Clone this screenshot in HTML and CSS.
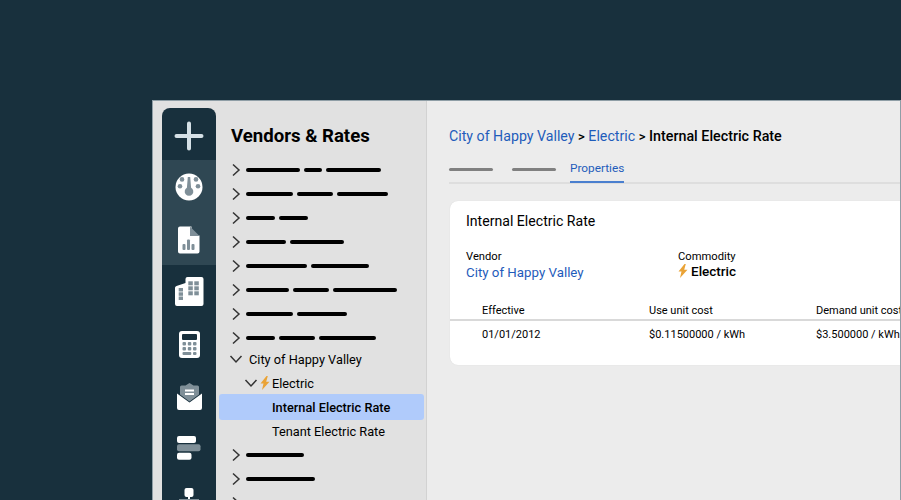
FILE: index.html
```html
<!DOCTYPE html>
<html lang="en">
<head>
<meta charset="utf-8">
<title>Vendors &amp; Rates</title>
<link rel="stylesheet" href="styles.css">
</head>
<body>
<div class="window">
  <nav class="rail">
    <div class="rail-item rail-add">
      <svg width="30" height="30" viewBox="0 0 30 30"><path d="M15 2.500v25M2.500 15h25" class="add-stroke"/></svg>
    </div>
    <div class="rail-active">
      <div class="rail-item rail-gauge">
        <svg width="28" height="28" viewBox="0 0 28 28"><circle cx="14" cy="14" r="13.500" fill="#fff"/><circle cx="5" cy="13.300" r="2.300" class="dim"/><circle cx="23" cy="13.300" r="2.300" class="dim"/><circle cx="7" cy="6.400" r="2.300" class="dim"/><circle cx="21" cy="6.400" r="2.300" class="dim"/><path d="M12.800 4h2.400l.9 10.800a4.300 4.300 0 1 1-4.200 0z" class="dim"/></svg>
      </div>
      <div class="rail-item rail-doc">
        <svg width="22" height="28" viewBox="0 0 22 28"><path d="M2 .5h11.500v9h8V25.500a2 2 0 0 1-2 2H2a2 2 0 0 1-2-2v-23a2 2 0 0 1 2-2z" fill="#fff"/><path d="M12 .5l9.500 9.500h-9.500z" class="dim"/><rect x="4.500" y="18" width="3" height="6" rx="1" class="dim"/><rect x="9" y="13.500" width="3" height="10.500" rx="1" class="dim"/><rect x="13.500" y="18" width="3" height="6" rx="1" class="dim"/></svg>
      </div>
    </div>
    <div class="rail-item rail-city">
      <svg width="29" height="29" viewBox="0 0 29 29"><path d="M10.500 2a2 2 0 0 1 2-2h14a2 2 0 0 1 2 2v25a2 2 0 0 1-2 2H2a2 2 0 0 1-2-2V11a2 2 0 0 1 1.500-2l9-3z" fill="#fff"/><g class="dim"><rect x="13.300" y="4.300" width="4.500" height="4"/><rect x="19.300" y="4.300" width="4.500" height="4"/><rect x="13.300" y="9.300" width="4.500" height="4"/><rect x="19.300" y="9.300" width="4.500" height="4"/><rect x="13.300" y="14.300" width="4.500" height="4"/><rect x="19.300" y="14.300" width="4.500" height="4"/><rect x="3.700" y="11" width="4.300" height="3.500"/><rect x="3.700" y="15.300" width="4.300" height="3.500"/><rect x="3.700" y="19.500" width="4.300" height="3.500"/></g></svg>
    </div>
    <div class="rail-item rail-calc">
      <svg width="21" height="27" viewBox="0 0 21 27"><rect width="21" height="27" rx="3" fill="#fff"/><rect x="3" y="3" width="15" height="6" rx="1" fill="#18303d"/><g class="dim"><rect x="3.500" y="11" width="3.500" height="3.500" rx="1"/><rect x="8.800" y="11" width="3.500" height="3.500" rx="1"/><rect x="14" y="11" width="3.500" height="3.500" rx="1"/><rect x="3.500" y="16" width="3.500" height="3.500" rx="1"/><rect x="8.800" y="16" width="3.500" height="3.500" rx="1"/><rect x="14" y="16" width="3.500" height="3.500" rx="1"/><rect x="3.500" y="21" width="8.800" height="3" rx="1"/><rect x="14" y="21" width="3.500" height="3" rx="1"/></g></svg>
    </div>
    <div class="rail-item rail-mail">
      <svg width="25" height="27" viewBox="0 0 25 27"><path d="M12.500 0l4 2.500h4a1.500 1.500 0 0 1 1.500 1.500v7.500l-9.500 7-9.500-7V4a1.500 1.500 0 0 1 1.500-1.500h4z" class="dim"/><path d="M8 7.500h9M8 11h9" stroke="#fff" stroke-width="1.800" fill="none"/><path d="M0 10.500l12.500 9 12.500-9V25a2 2 0 0 1-2 2H2a2 2 0 0 1-2-2z" fill="#fff"/></svg>
    </div>
    <div class="rail-item rail-bars">
      <svg width="24" height="24" viewBox="0 0 24 24"><rect width="19" height="7" rx="2" fill="#fff"/><rect y="8.300" width="23.500" height="7" rx="2" class="dim"/><rect y="16.700" width="14.500" height="7" rx="2" fill="#fff"/></svg>
    </div>
    <div class="rail-item rail-org">
      <svg width="28" height="16" viewBox="0 0 28 16"><rect x="9.500" width="9" height="9" rx="2" fill="#fff"/><rect x="13" y="9" width="2" height="3" fill="#fff"/><rect x="4" y="11" width="20" height="5" class="dim"/></svg>
    </div>
  </nav>

  <aside class="sidebar">
    <h1 class="sidebar-title">Vendors &amp; Rates</h1>
    <ul class="tree">
      <li class="row"><svg class="chev" viewBox="0 0 10 14"><path d="M2 1.500l6 5.500-6 5.500"/></svg><span class="bars"><i class="b54"></i><i class="b18"></i><i class="b55"></i></span></li>
      <li class="row"><svg class="chev" viewBox="0 0 10 14"><path d="M2 1.500l6 5.500-6 5.500"/></svg><span class="bars"><i class="b47"></i><i class="b36"></i><i class="b51"></i></span></li>
      <li class="row"><svg class="chev" viewBox="0 0 10 14"><path d="M2 1.500l6 5.500-6 5.500"/></svg><span class="bars"><i class="b29"></i><i class="b29"></i></span></li>
      <li class="row"><svg class="chev" viewBox="0 0 10 14"><path d="M2 1.500l6 5.500-6 5.500"/></svg><span class="bars"><i class="b40"></i><i class="b54"></i></span></li>
      <li class="row"><svg class="chev" viewBox="0 0 10 14"><path d="M2 1.500l6 5.500-6 5.500"/></svg><span class="bars"><i class="b61"></i><i class="b58"></i></span></li>
      <li class="row"><svg class="chev" viewBox="0 0 10 14"><path d="M2 1.500l6 5.500-6 5.500"/></svg><span class="bars"><i class="b43"></i><i class="b36"></i><i class="b64"></i></span></li>
      <li class="row"><svg class="chev" viewBox="0 0 10 14"><path d="M2 1.500l6 5.500-6 5.500"/></svg><span class="bars"><i class="b47"></i><i class="b50"></i></span></li>
      <li class="row"><svg class="chev" viewBox="0 0 10 14"><path d="M2 1.500l6 5.500-6 5.500"/></svg><span class="bars"><i class="b29"></i><i class="b36"></i><i class="b57"></i></span></li>
      <li class="row row-text row-vendor"><svg class="chev-down" viewBox="0 0 14 10"><path d="M1.500 2l5.500 6 5.500-6"/></svg><span class="vendor-name">City of Happy Valley</span></li>
      <li class="row row-text row-commodity"><svg class="chev-down" viewBox="0 0 14 10"><path d="M1.500 2l5.500 6 5.500-6"/></svg><svg class="bolt" viewBox="0 0 10 14"><path d="M6.500 0L.5 7.500h3L2 14l7.500-8.200H6.200L7.800 0z"/></svg><span>Electric</span></li>
      <li class="row row-text row-leaf row-selected">Internal Electric Rate</li>
      <li class="row row-text row-leaf">Tenant Electric Rate</li>
      <li class="row"><svg class="chev" viewBox="0 0 10 14"><path d="M2 1.500l6 5.500-6 5.500"/></svg><span class="bars"><i class="b58"></i></span></li>
      <li class="row"><svg class="chev" viewBox="0 0 10 14"><path d="M2 1.500l6 5.500-6 5.500"/></svg><span class="bars"><i class="b69"></i></span></li>
      <li class="row"><svg class="chev" viewBox="0 0 10 14"><path d="M2 1.500l6 5.500-6 5.500"/></svg></li>
    </ul>
  </aside>

  <main class="main">
    <div class="crumbs"><a class="link">City of Happy Valley</a> <b class="sep">&gt;</b> <a class="link">Electric</a> <b class="sep">&gt;</b> <b>Internal Electric Rate</b></div>
    <div class="tabs">
      <span class="tab-blank"></span>
      <span class="tab-blank"></span>
      <span class="tab-current">Properties</span>
    </div>
    <section class="card">
      <h2 class="card-title">Internal Electric Rate</h2>
      <div class="fields">
        <div class="field field-vendor">
          <div class="field-label">Vendor</div>
          <a class="link field-value">City of Happy Valley</a>
        </div>
        <div class="field">
          <div class="field-label">Commodity</div>
          <div class="field-strong"><svg class="bolt bolt-large" viewBox="0 0 10 14"><path d="M6.500 0L.5 7.500h3L2 14l7.500-8.200H6.200L7.800 0z"/></svg>Electric</div>
        </div>
      </div>
      <div class="grid grid-head">
        <span>Effective</span><span>Use unit cost</span><span>Demand unit cost</span>
      </div>
      <div class="grid grid-row">
        <span>01/01/2012</span><span>$0.11500000 / kWh</span><span>$3.500000 / kWh</span>
      </div>
    </section>
  </main>
</div>
</body>
</html>
```

FILE: styles.css
```css
* { box-sizing: border-box; }
html, body { margin: 0; height: 100%; overflow: hidden; }
body {
  background: #18303d;
  padding: 100px 0 0 152px;
  font-family: Roboto, "Liberation Sans", sans-serif;
  color: #000;
}
.window {
  display: flex;
  width: 749px;
  height: 400px;
  overflow: hidden;
  background: #e1e1e1;
  border: 1px solid #8f9ea6;
  border-bottom: 0;
}

/* rail */
.rail {
  flex: 0 0 54px;
  margin: 7px 0 0 9px;
  background: #18303d;
  border-radius: 8px 8px 0 0;
  overflow: hidden;
  height: 392px;
  display: flex;
  flex-direction: column;
}
.rail-item { display: flex; justify-content: center; align-items: center; flex: none; }
.rail-add { height: 52px; padding-top: 3px; }
.rail-active { background: #2f4753; height: 105px; }
.rail-gauge { height: 53px; }
.rail-doc { height: 52px; padding-top: 1px; }
.rail-city { height: 52px; padding-top: 1px; }
.rail-calc { height: 52px; padding-top: 2px; }
.rail-mail { height: 52px; padding-top: 2px; }
.rail-bars { height: 52px; padding-top: 2px; }
.rail-org { height: 27px; align-items: flex-start; padding-top: 15px; overflow: hidden; }
.add-stroke { stroke: #d5e0e6; stroke-width: 4; stroke-linecap: round; fill: none; }
.dim { fill: #7f8f98; }

/* tree */
.sidebar {
  flex: 0 0 211px;
  padding: 0 2px 0 3px;
  border-right: 1px solid #d2d2d2;
  overflow: hidden;
}
.sidebar-title {
  margin: 25px 0 11px 12px;
  font-size: 18.600px;
  line-height: 21px;
  font-weight: 700;
}
.tree { list-style: none; margin: 0; padding: 0; }
.row {
  height: 24px;
  display: flex;
  align-items: center;
  padding-left: 12px;
  font-size: 12.750px;
  white-space: nowrap;
}
.chev { width: 10px; height: 14px; flex: none; fill: none; stroke: #333; stroke-width: 1.500; }
.chev-down { width: 14px; height: 10px; flex: none; fill: none; stroke: #333; stroke-width: 1.500; }
.bars { display: flex; gap: 4px; margin-left: 5px; }
.bars i { display: block; height: 4px; border-radius: 2px; background: #000; }
.b18 { width: 18px; } .b29 { width: 29px; } .b36 { width: 36px; } .b40 { width: 40px; }
.b43 { width: 43px; } .b47 { width: 47px; } .b50 { width: 50px; } .b51 { width: 51px; }
.b54 { width: 54px; } .b55 { width: 55px; } .b57 { width: 57px; } .b58 { width: 58px; }
.b61 { width: 61px; } .b64 { width: 64px; } .b69 { width: 69px; }
.row-vendor { margin-top: -3px; padding-left: 10px; }
.vendor-name { margin-left: 6px; }
.row-commodity { padding-left: 25px; }
.bolt { width: 10px; height: 14px; fill: #eaa336; flex: none; margin: 0 2px; }
.row-leaf { padding-left: 53px; }
.row-selected {
  background: #b0cbfb;
  border-radius: 3px;
  font-weight: 500;
  height: 26px;
  margin-top: -1px;
  margin-bottom: -1px;
}

/* main */
.main { flex: 1; min-width: 0; background: #ececec; padding: 26px 0 0 22px; overflow: hidden; }
.crumbs { font-size: 14.200px; line-height: 18px; white-space: nowrap; }
.crumbs b { font-weight: 500; font-size: 14.300px; }
.crumbs .sep { font-size: 13px; }
.link { color: #1f5cbb; }
.tabs {
  display: flex;
  align-items: center;
  height: 27px;
  margin-top: 11px;
  border-bottom: 2px solid #dedede;
}
.tab-blank { width: 44px; height: 3px; border-radius: 2px; background: #808080; margin-right: 19px; }
.tab-blank + .tab-blank { margin-right: 14px; }
.tab-current {
  font-size: 11.800px;
  line-height: 14px;
  color: #1f5cbb;
  align-self: stretch;
  padding-top: 4px;
  border-bottom: 2px solid #4a7fcf;
  margin-bottom: -1px;
}
.card {
  margin: 17px 0 0 1px;
  width: 520px;
  height: 164px;
  background: #fff;
  border-radius: 8px 0 0 8px;
  box-shadow: 0 0 1px #cfcfcf;
  overflow: hidden;
}
.card-title { margin: 12px 0 0 16px; font-size: 14.100px; line-height: 17px; font-weight: 400; }
.fields { display: flex; margin: 20px 0 0 16px; }
.field-vendor { width: 212px; }
.field-label { font-size: 11.200px; line-height: 14px; }
.field-value { font-size: 13.300px; line-height: 16px; margin-top: 1px; display: block; }
.field-strong { font-size: 13.500px; line-height: 16px; font-weight: 500; margin-top: -1px; display: flex; align-items: center; }
.bolt-large { margin: 0 3px 0 0; }
.grid { display: grid; grid-template-columns: 167px 167px 1fr; padding-left: 32px; font-size: 11px; white-space: nowrap; }
.grid-head { margin-top: 20px; height: 20px; line-height: 16px; border-bottom: 2px solid #d9d9d9; padding-top: 2px; }
.grid-row { height: 28px; line-height: 28px; }
```
